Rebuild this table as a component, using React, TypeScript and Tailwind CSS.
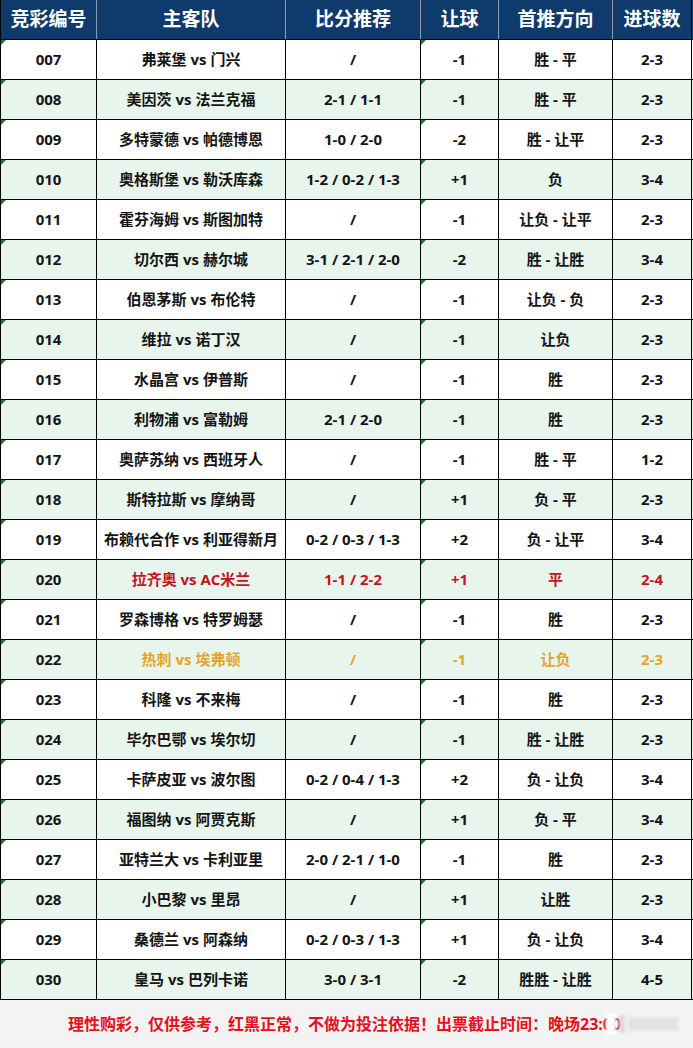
import React from "react";

type Row = [string, string, string, string, string, string, ("red" | "gold")?];

const rows: Row[] = [
  ["007", "弗莱堡 vs 门兴", "/", "-1", "胜 - 平", "2-3"],
  ["008", "美因茨 vs 法兰克福", "2-1 / 1-1", "-1", "胜 - 平", "2-3"],
  ["009", "多特蒙德 vs 帕德博恩", "1-0 / 2-0", "-2", "胜 - 让平", "2-3"],
  ["010", "奥格斯堡 vs 勒沃库森", "1-2 / 0-2 / 1-3", "+1", "负", "3-4"],
  ["011", "霍芬海姆 vs 斯图加特", "/", "-1", "让负 - 让平", "2-3"],
  ["012", "切尔西 vs 赫尔城", "3-1 / 2-1 / 2-0", "-2", "胜 - 让胜", "3-4"],
  ["013", "伯恩茅斯 vs 布伦特", "/", "-1", "让负 - 负", "2-3"],
  ["014", "维拉 vs 诺丁汉", "/", "-1", "让负", "2-3"],
  ["015", "水晶宫 vs 伊普斯", "/", "-1", "胜", "2-3"],
  ["016", "利物浦 vs 富勒姆", "2-1 / 2-0", "-1", "胜", "2-3"],
  ["017", "奥萨苏纳 vs 西班牙人", "/", "-1", "胜 - 平", "1-2"],
  ["018", "斯特拉斯 vs 摩纳哥", "/", "+1", "负 - 平", "2-3"],
  ["019", "布赖代合作 vs 利亚得新月", "0-2 / 0-3 / 1-3", "+2", "负 - 让平", "3-4"],
  ["020", "拉齐奥 vs AC米兰", "1-1 / 2-2", "+1", "平", "2-4", "red"],
  ["021", "罗森博格 vs 特罗姆瑟", "/", "-1", "胜", "2-3"],
  ["022", "热刺 vs 埃弗顿", "/", "-1", "让负", "2-3", "gold"],
  ["023", "科隆 vs 不来梅", "/", "-1", "胜", "2-3"],
  ["024", "毕尔巴鄂 vs 埃尔切", "/", "-1", "胜 - 让胜", "2-3"],
  ["025", "卡萨皮亚 vs 波尔图", "0-2 / 0-4 / 1-3", "+2", "负 - 让负", "3-4"],
  ["026", "福图纳 vs 阿贾克斯", "/", "+1", "负 - 平", "3-4"],
  ["027", "亚特兰大 vs 卡利亚里", "2-0 / 2-1 / 1-0", "-1", "胜", "2-3"],
  ["028", "小巴黎 vs 里昂", "/", "+1", "让胜", "2-3"],
  ["029", "桑德兰 vs 阿森纳", "0-2 / 0-3 / 1-3", "+1", "负 - 让负", "3-4"],
  ["030", "皇马 vs 巴列卡诺", "3-0 / 3-1", "-2", "胜胜 - 让胜", "4-5"],
];

const widths = ["w-[96px]", "w-[189px]", "w-[135px]", "w-[78px]", "w-[114px]", "w-[79px]"];
const headers = ["竞彩编号", "主客队", "比分推荐", "让球", "首推方向", "进球数"];

function Flag() {
  return (
    <span className="absolute left-0 top-0 w-0 h-0 border-t-[5px] border-r-[5px] border-t-[#1f7a33] border-r-transparent" />
  );
}

export default function App() {
  return (
    <div
      className="w-[693px] bg-white font-bold"
      style={{ fontFamily: '"Open Sans", "Noto Sans CJK SC", sans-serif' }}
    >
      <div className="border-l border-black">
        <div className="flex h-[40px] bg-[#0e3a6c] border-b border-black">
          {headers.map((h, i) => (
            <div
              key={h}
              className={`${widths[i]} flex items-center justify-center text-white text-[19px] border-r ${
                i === 5 ? "border-black" : "border-[#8a9bb3]"
              }`}
            >
              {h}
            </div>
          ))}
        </div>
        {rows.map((r, idx) => {
          const tone =
            r[6] === "red" ? "text-[#c4141b]" : r[6] === "gold" ? "text-[#e4a42a]" : "text-[#141414]";
          return (
            <div
              key={r[0]}
              className={`flex h-[40px] border-b border-black ${idx % 2 ? "bg-[#e7f5ed]" : "bg-white"}`}
            >
              {r.slice(0, 6).map((c, i) => (
                <div
                  key={i}
                  className={`${widths[i]} relative flex items-center justify-center border-r border-black ${
                    i === 1 || i === 4 ? "text-[15px]" : "text-[15px]"
                  } ${i === 0 ? "text-[#141414]" : tone}`}
                >
                  {(i === 0 || i === 3) && <Flag />}
                  {c}
                </div>
              ))}
            </div>
          );
        })}
      </div>
      <div className="relative h-[48px] bg-[#f3f3f3] flex items-center pl-[68px] text-[16px] text-[#e8101c]">
        理性购彩，仅供参考，红黑正常，不做为投注依据！出票截止时间：晚场23:00
        <div className="absolute left-[606px] top-[12px] w-[76px] h-[24px] flex items-center gap-[3px] blur-[1.5px]">
          <span className="w-[10px] h-[20px] bg-white" />
          <span className="w-[6px] h-[18px] bg-[#d9d9d9]" />
          <span className="w-[50px] h-[14px] bg-[#e2e2e2]" />
        </div>
      </div>
    </div>
  );
}
